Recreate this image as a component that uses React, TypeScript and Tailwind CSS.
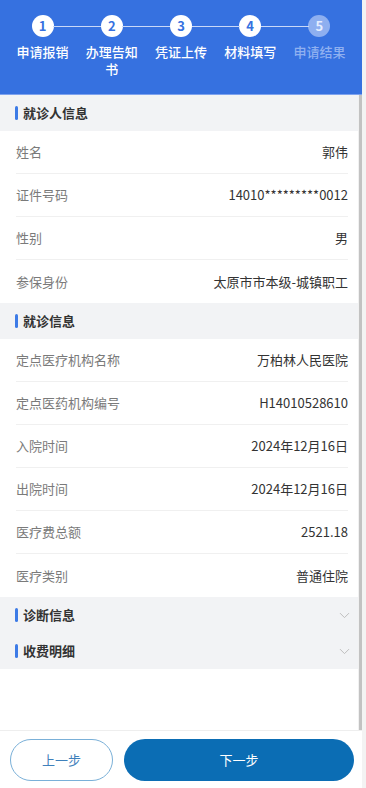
import { ChevronDown } from 'lucide-react'

const steps = [
  { n: 1, label: '申请报销', done: true },
  { n: 2, label: '办理告知书', done: true },
  { n: 3, label: '凭证上传', done: true },
  { n: 4, label: '材料填写', done: true },
  { n: 5, label: '申请结果', done: false },
]

const patient = [
  ['姓名', '郭伟'],
  ['证件号码', '14010*********0012'],
  ['性别', '男'],
  ['参保身份', '太原市市本级-城镇职工'],
]

const visit = [
  ['定点医疗机构名称', '万柏林人民医院'],
  ['定点医药机构编号', 'H14010528610'],
  ['入院时间', '2024年12月16日'],
  ['出院时间', '2024年12月16日'],
  ['医疗费总额', '2521.18'],
  ['医疗类别', '普通住院'],
]

function SectionTitle({ title, collapsible }: { title: string; collapsible?: boolean }) {
  return (
    <div className="flex items-center h-[36px] bg-[#f2f3f5] pl-[15px] pr-[5px]">
      <span className="w-[3px] h-[14px] bg-[#3d7be6] rounded-sm" />
      <span className="ml-[5px] text-[13px] font-bold text-[#333]">{title}</span>
      {collapsible && <ChevronDown className="ml-auto text-[#bdbdbd]" size={17} strokeWidth={1.4} />}
    </div>
  )
}

function Rows({ rows }: { rows: string[][] }) {
  return (
    <div className="bg-white pl-[16px] pr-[10px]">
      {rows.map(([k, v], i) => (
        <div
          key={k}
          className={`flex items-center justify-between h-[43px] ${i < rows.length - 1 ? 'border-b border-[#f0f0f0]' : ''}`}
        >
          <span className="text-[13px] text-[#7a7a7a]">{k}</span>
          <span className="text-[13px] text-[#333]">{v}</span>
        </div>
      ))}
    </div>
  )
}

export default function App() {
  return (
    <div
      className="w-[366px] h-[788px] bg-[#f3f3f3] overflow-hidden"
      style={{ fontFamily: '"Noto Sans CJK SC", "Noto Sans", sans-serif' }}
    >
      <div className="w-[362px] h-full flex flex-col">
        {/* Steps */}
        <div className="bg-[#3671e0] h-[95px] border-b border-[#7ea2ee] px-[8px] pt-[15px] flex">
          {steps.map((s, i) => (
            <div key={s.n} className="w-[70px] flex flex-col items-center relative">
              {i > 0 && <div className="absolute top-[11px] left-0 w-[24px] h-px bg-[#c9d8f8]" />}
              {i < steps.length - 1 && <div className="absolute top-[11px] right-0 w-[24px] h-px bg-[#c9d8f8]" />}
              <div
                className={`w-[22px] h-[22px] rounded-full flex items-center justify-center text-[13px] font-bold ${
                  s.done ? 'bg-white text-[#3671e0]' : 'bg-[#8eaff0] text-[#e6eeff]'
                }`}
              >
                {s.n}
              </div>
              <div
                className={`mt-[6px] px-[8px] text-center text-[13px] leading-[17px] font-medium ${
                  s.done ? 'text-white' : 'text-[#8fb0f0]'
                }`}
              >
                {s.label}
              </div>
            </div>
          ))}
        </div>

        {/* Content */}
        <div className="flex-1 flex bg-white">
          <div className="w-[358px]">
            <SectionTitle title="就诊人信息" />
            <Rows rows={patient} />
            <SectionTitle title="就诊信息" />
            <Rows rows={visit} />
            <SectionTitle title="诊断信息" collapsible />
            <SectionTitle title="收费明细" collapsible />
          </div>
          <div className="w-[4px] bg-[#f1f1f1] flex justify-center">
            <div className="w-[3px] h-full bg-[#c2c2c2]" />
          </div>
        </div>

        {/* Bottom bar */}
        <div className="h-[58px] bg-white border-t border-[#eeeeee] flex items-center gap-[11px] px-[10px]">
          <button className="w-[103px] h-[42px] rounded-full border border-[#7ab0d8] text-[13px] text-[#3f80bb]">
            上一步
          </button>
          <button className="flex-1 mr-[-2px] h-[42px] rounded-full bg-[#0b6db4] text-[13px] text-white">
            下一步
          </button>
        </div>
      </div>
    </div>
  )
}
